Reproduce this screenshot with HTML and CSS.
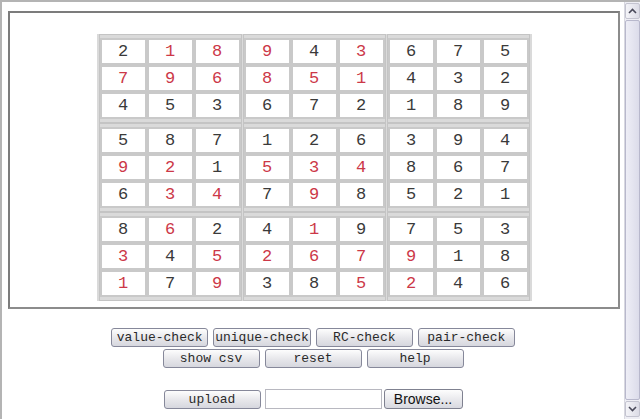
FILE: index.html
```html
<!DOCTYPE html>
<html>
<head>
<meta charset="utf-8">
<link rel="stylesheet" href="styles.css">
</head>
<body>
<div class="window">
  <div class="page">
    <div class="frame">
      <div class="board">
        <div class="block">
          <div class="cell">2</div><div class="cell red">1</div><div class="cell red">8</div>
          <div class="cell red">7</div><div class="cell red">9</div><div class="cell red">6</div>
          <div class="cell">4</div><div class="cell">5</div><div class="cell">3</div>
        </div>
        <div class="block">
          <div class="cell red">9</div><div class="cell">4</div><div class="cell red">3</div>
          <div class="cell red">8</div><div class="cell red">5</div><div class="cell red">1</div>
          <div class="cell">6</div><div class="cell">7</div><div class="cell">2</div>
        </div>
        <div class="block">
          <div class="cell">6</div><div class="cell">7</div><div class="cell">5</div>
          <div class="cell">4</div><div class="cell">3</div><div class="cell">2</div>
          <div class="cell">1</div><div class="cell">8</div><div class="cell">9</div>
        </div>
        <div class="block">
          <div class="cell">5</div><div class="cell">8</div><div class="cell">7</div>
          <div class="cell red">9</div><div class="cell red">2</div><div class="cell">1</div>
          <div class="cell">6</div><div class="cell red">3</div><div class="cell red">4</div>
        </div>
        <div class="block">
          <div class="cell">1</div><div class="cell">2</div><div class="cell">6</div>
          <div class="cell red">5</div><div class="cell red">3</div><div class="cell red">4</div>
          <div class="cell">7</div><div class="cell red">9</div><div class="cell">8</div>
        </div>
        <div class="block">
          <div class="cell">3</div><div class="cell">9</div><div class="cell">4</div>
          <div class="cell">8</div><div class="cell">6</div><div class="cell">7</div>
          <div class="cell">5</div><div class="cell">2</div><div class="cell">1</div>
        </div>
        <div class="block">
          <div class="cell">8</div><div class="cell red">6</div><div class="cell">2</div>
          <div class="cell red">3</div><div class="cell">4</div><div class="cell red">5</div>
          <div class="cell red">1</div><div class="cell">7</div><div class="cell red">9</div>
        </div>
        <div class="block">
          <div class="cell">4</div><div class="cell red">1</div><div class="cell">9</div>
          <div class="cell red">2</div><div class="cell red">6</div><div class="cell red">7</div>
          <div class="cell">3</div><div class="cell">8</div><div class="cell red">5</div>
        </div>
        <div class="block">
          <div class="cell">7</div><div class="cell">5</div><div class="cell">3</div>
          <div class="cell red">9</div><div class="cell">1</div><div class="cell">8</div>
          <div class="cell red">2</div><div class="cell">4</div><div class="cell">6</div>
        </div>
      </div>
    </div>
    <div class="controls">
      <div class="row">
        <button class="btn">value-check</button>
        <button class="btn">unique-check</button>
        <button class="btn">RC-check</button>
        <button class="btn">pair-check</button>
      </div>
      <div class="row">
        <button class="btn">show csv</button>
        <button class="btn">reset</button>
        <button class="btn">help</button>
      </div>
      <div class="row upload-row">
        <button class="btn">upload</button>
        <div class="file-field"></div>
        <button class="browse">Browse...</button>
      </div>
    </div>
  </div>
  <div class="scrollbar">
    <div class="sb-btn">
      <svg width="9" height="6" viewBox="0 0 9 6"><path d="M1 5 L4.5 1.5 L8 5" fill="none" stroke="#4a4a5a" stroke-width="1.6"/></svg>
    </div>
    <div class="sb-thumb"></div>
    <div class="sb-btn">
      <svg width="9" height="6" viewBox="0 0 9 6"><path d="M1 1 L4.5 4.5 L8 1" fill="none" stroke="#4a4a5a" stroke-width="1.6"/></svg>
    </div>
  </div>
</div>
</body>
</html>
```

FILE: styles.css
```css
html, body {
  margin: 0;
  padding: 0;
  background: #ffffff;
}

.window {
  display: flex;
  height: 419px;
  box-sizing: border-box;
  border-top: 2px solid #b4b4b4;
  border-left: 2px solid #b4b4b4;
  overflow: hidden;
}

.page {
  flex: 1;
  display: flex;
  flex-direction: column;
}

.frame {
  margin: 9px 4px 0 6px;
  height: 298px;
  box-sizing: border-box;
  border: 2px solid #7c7c7c;
  border-right-color: #8c8c8c;
  border-bottom-color: #8c8c8c;
  padding-top: 21px;
}

.board {
  display: grid;
  grid-template-columns: repeat(3, auto);
  column-gap: 1px;
  width: fit-content;
  margin: 0 auto;
  padding: 0 2px;
  background: #dadada;
}

.block {
  display: grid;
  grid-template-columns: repeat(3, 47px);
  grid-auto-rows: 27px;
  border: 1px solid #c4c4c4;
  padding: 3px 0;
}

.cell {
  box-sizing: border-box;
  border: 2px solid #c9c9c9;
  background: #ffffff;
  display: flex;
  align-items: center;
  justify-content: center;
  font-family: "Liberation Mono", "DejaVu Sans Mono", monospace;
  font-size: 17px;
  color: #3a3a3a;
}

.cell.red {
  color: #cc3848;
}

.controls {
  display: flex;
  flex-direction: column;
  align-items: center;
  margin-top: 19px;
}

.row {
  display: flex;
  justify-content: center;
  gap: 5px;
  margin-bottom: 2px;
}

.upload-row {
  margin-top: 19px;
  gap: 4px;
  align-items: center;
}

.btn {
  box-sizing: border-box;
  min-width: 97px;
  height: 19px;
  padding: 0 1px;
  border: 1px solid #86889a;
  border-radius: 3px;
  background: linear-gradient(#fdfdfd, #e6e6ea 55%, #d6d7de);
  font-family: "Liberation Mono", monospace;
  font-size: 13px;
  color: #2a2a2a;
  line-height: 17px;
}

.file-field {
  width: 117px;
  height: 20px;
  box-sizing: border-box;
  border: 1px solid #b8b8c0;
  background: #ffffff;
}

.browse {
  box-sizing: border-box;
  width: 79px;
  height: 20px;
  padding: 0;
  margin-left: -2px;
  border: 1px solid #7f8190;
  border-radius: 3px;
  background: linear-gradient(#fdfdfd, #e8e8ec 55%, #d8d9e0);
  font-family: "Liberation Sans", Arial, sans-serif;
  font-size: 14px;
  color: #111111;
}

.scrollbar {
  width: 16px;
  display: flex;
  flex-direction: column;
  background: #eeeef4;
  border-left: 1px solid #d8d8e0;
  box-sizing: border-box;
  padding: 1px 0 2px;
}

.sb-btn {
  height: 16px;
  display: flex;
  align-items: center;
  justify-content: center;
  background: linear-gradient(90deg, #f4f4f8, #dcdce6);
  border: 1px solid #c4c4d0;
  border-radius: 2px;
  box-sizing: border-box;
}

.sb-thumb {
  flex: 1;
  margin: 1px 0;
  background: linear-gradient(90deg, #eeeef6, #dcdcea);
  border: 1px solid #b8b8cc;
  border-radius: 2px;
}
```
